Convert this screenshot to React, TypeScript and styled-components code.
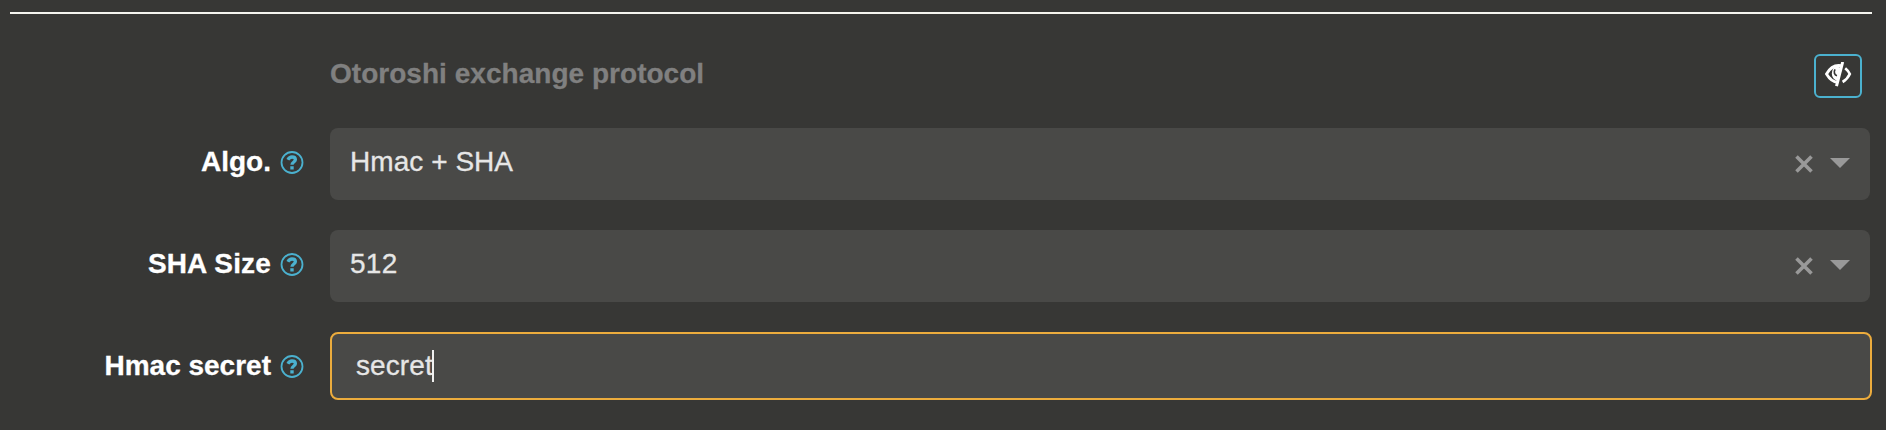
import React from "react";
import styled, { createGlobalStyle } from "styled-components";

const GlobalStyle = createGlobalStyle`
  *, *::before, *::after { box-sizing: border-box; }
  html, body { margin: 0; background: #373735; }
  body {
    font: 28px/40px "Liberation Sans", Arial, sans-serif;
    color: #fff;
    -webkit-text-stroke: 0.3px currentColor;
  }
`;

const Form = styled.main`
  height: 430px;
  padding: 12px 14px 0 10px;
  background: #373735;
  overflow: hidden;
`;

const Divider = styled.hr`
  height: 2px;
  margin: 0 0 40px;
  border: 0;
  background: #f5f5ef;
`;

const Header = styled.header`
  display: flex;
  align-items: flex-start;
  justify-content: space-between;
  height: 74px;
  padding: 0 10px 0 320px;
`;

const Title = styled.h3`
  margin: 0;
  font-size: 28px;
  font-weight: 700;
  line-height: 40px;
  letter-spacing: 0.03px;
  color: #808080;
`;

const ToggleButton = styled.button`
  display: flex;
  width: 48px;
  height: 44px;
  padding: 6px 0 0 9px;
  border: 2px solid #4bb1cf;
  border-radius: 6px;
  background: #373735;
  color: #fff;
`;

const Row = styled.div`
  display: grid;
  grid-template-columns: 294px 1fr;
  column-gap: 26px;
  margin-bottom: 30px;
`;

const Label = styled.label`
  display: flex;
  justify-content: flex-end;
  height: 40px;
  margin-top: 14px;
  font-weight: 700;
  white-space: nowrap;

  svg { margin: 9px 0.5px 0 8.5px; flex: none; }
`;

const Select = styled.div`
  display: flex;
  height: 72px;
  margin-right: 2px;
  padding: 14px 20px 0 20px;
  border-radius: 8px;
  background: #494947;
  color: #e6e6e6;
`;

const SelectValue = styled.span`
  flex: 1;
`;

const Clear = styled.svg`
  margin: 13px 17px 0 0;
`;

const Caret = styled.svg`
  margin-top: 16px;
`;

const Field = styled.div`
  display: flex;
  height: 68px;
  padding: 12px 24px;
  border: 2px solid #ecac3d;
  border-radius: 8px;
  background: #494947;
  color: #e6e6e6;
`;

const Cursor = styled.span`
  width: 2px;
  height: 32px;
  margin: 4px 0 0 -1px;
  background: #f0f0f0;
`;

const Text = styled.span<{ $spacing?: number }>`
  letter-spacing: ${({ $spacing = 0 }) => $spacing}px;
`;

const HelpIcon = () => (
  <svg width="24" height="24" viewBox="0 0 24 24" fill="none">
    <circle cx="12" cy="11.5" r="10.5" stroke="#4bb1cf" strokeWidth="1.8" />
    <path d="M7.9 8.7C8.9 6.9 10.2 6 12 6C14.1 6 15.4 7.2 15.4 8.8C15.4 11.1 12 11 12 13.8" stroke="#4bb1cf" strokeWidth="3.3" />
    <path d="M10.3 15.3h3.4v3.2h-3.4z" fill="#4bb1cf" />
  </svg>
);

const EyeCloseIcon = () => (
  <svg width="28" height="26" viewBox="0 0 28 26" fill="none" stroke="currentColor">
    <path d="M16 3.7C8.5 2.5 4.2 7.2 1.5 12C4.2 16.5 7.4 20 12.6 20.3" strokeWidth="2.8" />
    <path d="M15.4 5.4L12.2 18.6C8.4 17.5 6.8 14.5 6.9 11.2C7 8.5 8.1 5.5 10.5 4.2z" fill="currentColor" stroke="none" />
    <path d="M10.1 7.4C8.4 10 9.4 13 12 13.8" stroke="#373735" strokeWidth="1.7" />
    <path d="M20.2 6.3C22.3 8 23.8 9.8 24.8 12C23.2 15.4 21 18 17.6 20" strokeWidth="2.7" />
    <path d="M17.7 0L11.5 24.2" strokeWidth="3" />
  </svg>
);

const SelectRow = ({ label, value, spacing, valueSpacing }: { label: string; value: string; spacing?: number; valueSpacing?: number }) => (
  <Row>
    <Label><Text $spacing={spacing}>{label}</Text><HelpIcon /></Label>
    <Select>
      <SelectValue><Text $spacing={valueSpacing}>{value}</Text></SelectValue>
      <Clear width="18" height="18" viewBox="0 0 18 18"><path d="M1.5 1.5l15 15m0-15l-15 15" stroke="#999" strokeWidth="3.6" /></Clear>
      <Caret width="20" height="10" viewBox="0 0 20 10"><path d="M0 0h20L10 10z" fill="#999" /></Caret>
    </Select>
  </Row>
);

export default function App() {
  return (
    <>
      <GlobalStyle />
      <Form>
        <Divider />
        <Header>
          <Title>Otoroshi exchange protocol</Title>
          <ToggleButton type="button" aria-label="Hide section"><EyeCloseIcon /></ToggleButton>
        </Header>
        <SelectRow label="Algo." value="Hmac + SHA" valueSpacing={0.05} />
        <SelectRow label="SHA Size" value="512" spacing={0.15} valueSpacing={0.3} />
        <Row>
          <Label><Text>Hmac secret</Text><HelpIcon /></Label>
          <Field><Text $spacing={0.1}>secret</Text><Cursor /></Field>
        </Row>
      </Form>
    </>
  );
}
